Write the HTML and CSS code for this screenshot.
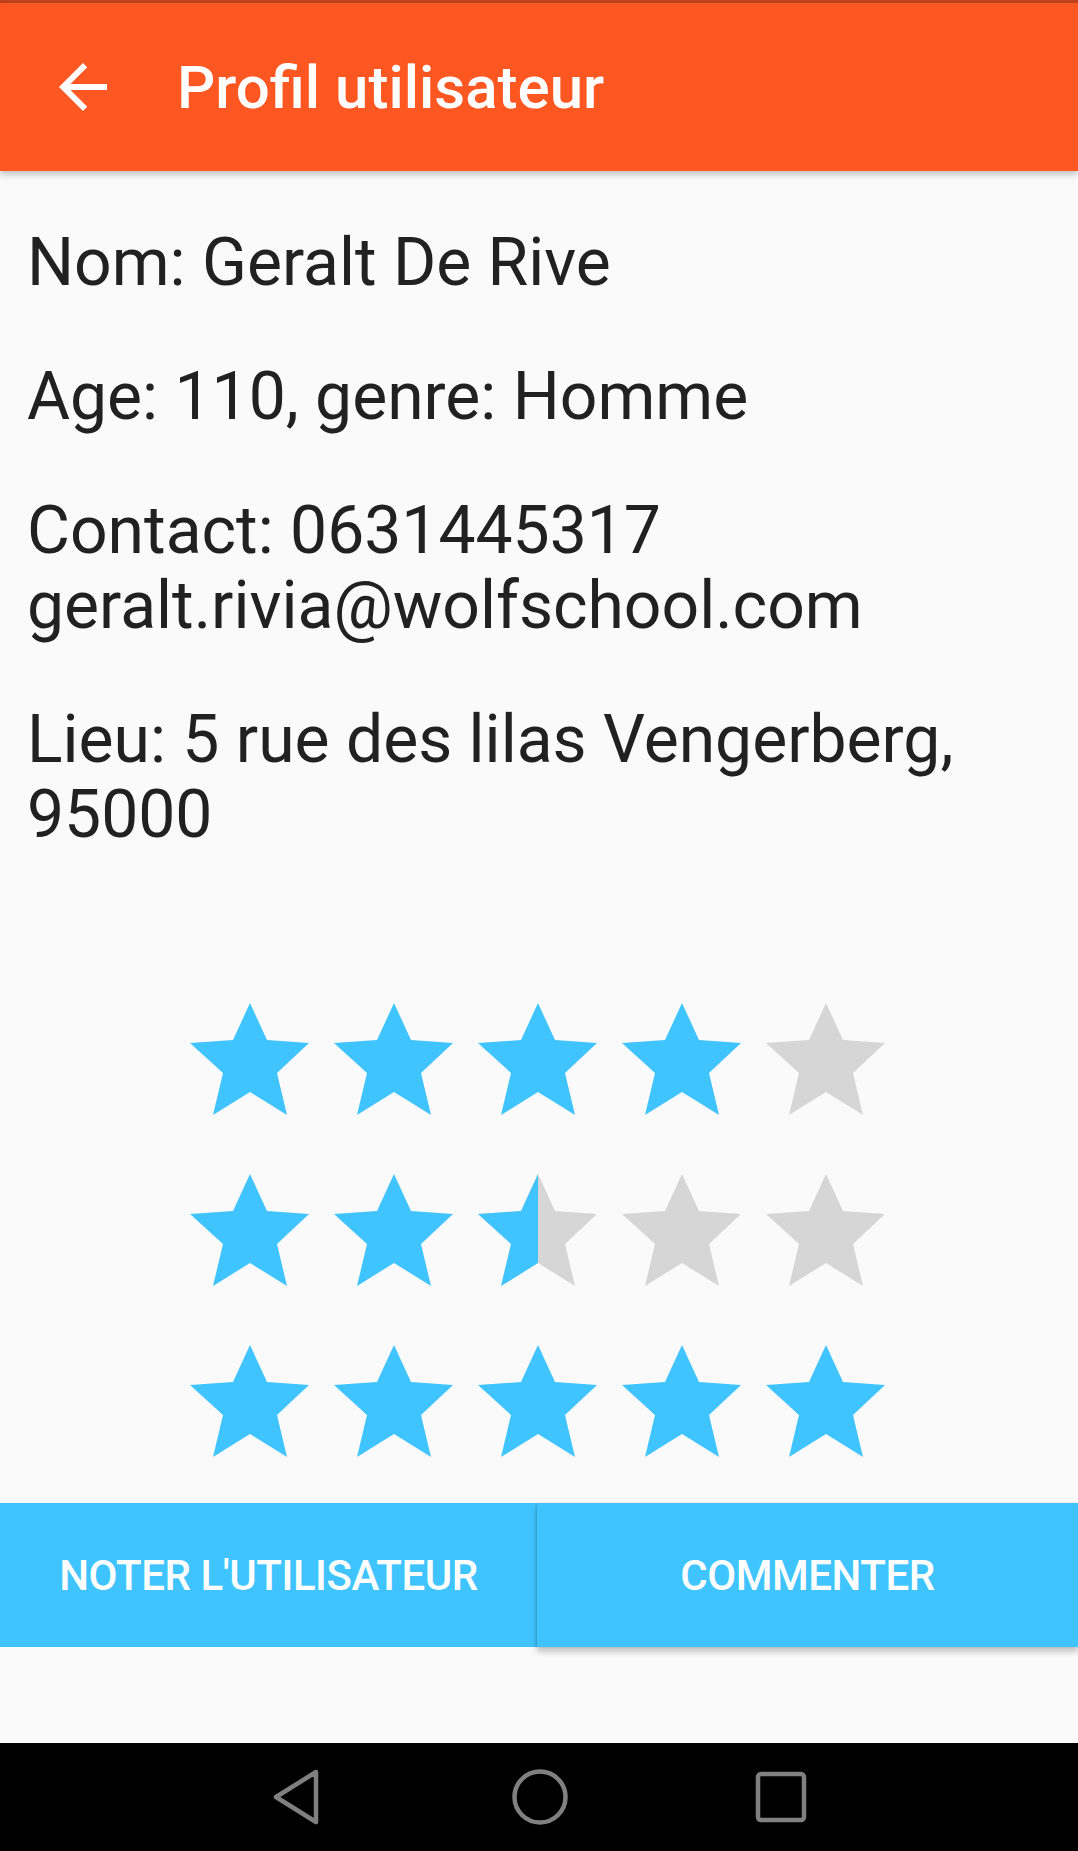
FILE: index.html
```html
<!DOCTYPE html>
<html lang="fr">
<head>
<meta charset="utf-8">
<title>Profil utilisateur</title>
<link rel="stylesheet" href="styles.css">
</head>
<body>
<svg class="defs" width="0" height="0" aria-hidden="true">
  <defs>
    <symbol id="star" viewBox="0 0 144 144">
      <polygon points="71,16 88,53 130,56 98,86 108,128 71,105 34,128 44,86 11,56 54,53"/>
    </symbol>
    <clipPath id="half">
      <rect x="0" y="0" width="71" height="144"/>
    </clipPath>
  </defs>
</svg>
<div class="screen">
  <div class="statusline"></div>
  <header class="appbar">
    <svg class="back" viewBox="0 0 24 24" width="72" height="72" aria-hidden="true">
      <path d="M20 11H7.83l5.59-5.59L12 4l-8 8 8 8 1.41-1.41L7.83 13H20v-2z" fill="#fff"/>
    </svg>
    <h1 class="title">Profil utilisateur</h1>
  </header>

  <main class="content">
    <p class="info">Nom: Geralt De Rive</p>
    <p class="info">Age: 110, genre: Homme</p>
    <p class="info">Contact: 0631445317 geralt.rivia@wolfschool.com</p>
    <p class="info">Lieu: 5 rue des lilas Vengerberg, 95000</p>

    <div class="ratings">
      <div class="stars">
        <svg class="star on"><use href="#star"/></svg>
        <svg class="star on"><use href="#star"/></svg>
        <svg class="star on"><use href="#star"/></svg>
        <svg class="star on"><use href="#star"/></svg>
        <svg class="star off"><use href="#star"/></svg>
      </div>
      <div class="stars">
        <svg class="star on"><use href="#star"/></svg>
        <svg class="star on"><use href="#star"/></svg>
        <svg class="star off" viewBox="0 0 144 144"><use href="#star" width="144" height="144"/><g clip-path="url(#half)"><use class="fill-on" href="#star" width="144" height="144"/></g></svg>
        <svg class="star off"><use href="#star"/></svg>
        <svg class="star off"><use href="#star"/></svg>
      </div>
      <div class="stars">
        <svg class="star on"><use href="#star"/></svg>
        <svg class="star on"><use href="#star"/></svg>
        <svg class="star on"><use href="#star"/></svg>
        <svg class="star on"><use href="#star"/></svg>
        <svg class="star on"><use href="#star"/></svg>
      </div>
    </div>

    <div class="actions">
      <button class="btn btn-left">Noter l'utilisateur</button>
      <button class="btn btn-right">Commenter</button>
    </div>
  </main>

  <nav class="navbar">
    <svg class="nav-icon" width="50" height="58" viewBox="0 0 50 58" aria-hidden="true">
      <path d="M44 4 L4 29 L44 54 Z" fill="none" stroke="#808080" stroke-width="4.5" stroke-linejoin="round"/>
    </svg>
    <svg class="nav-icon" width="58" height="58" viewBox="0 0 58 58" aria-hidden="true">
      <circle cx="29" cy="29" r="25.5" fill="none" stroke="#808080" stroke-width="4.5"/>
    </svg>
    <svg class="nav-icon" width="52" height="52" viewBox="0 0 52 52" aria-hidden="true">
      <rect x="3" y="3" width="46" height="46" rx="3" fill="none" stroke="#808080" stroke-width="4.5"/>
    </svg>
  </nav>
</div>
</body>
</html>
```

FILE: styles.css
```css
* {
  box-sizing: border-box;
}

html, body {
  margin: 0;
  padding: 0;
}

body {
  background: #fafafa;
  font-family: Roboto, "Noto Sans", "Liberation Sans", sans-serif;
  color: #212121;
}

.defs {
  position: absolute;
  width: 0;
  height: 0;
  overflow: hidden;
}

.screen {
  width: 1078px;
  height: 1851px;
  display: flex;
  flex-direction: column;
  overflow: hidden;
}

.statusline {
  height: 3px;
  background: #c1441a;
  flex: none;
}

.appbar {
  height: 168px;
  flex: none;
  background: #ff5722;
  display: flex;
  align-items: center;
  position: relative;
  z-index: 2;
  box-shadow: 0 3px 7px rgba(0, 0, 0, 0.26);
}

.back {
  margin-left: 47px;
  flex: none;
}

.title {
  margin: 0 0 0 58px;
  font-size: 60px;
  font-weight: 500;
  color: #fff;
  line-height: 1;
  padding-top: 2px;
}

.content {
  flex: 1;
  padding: 54px 27px 0 27px;
  display: flex;
  flex-direction: column;
}

.info {
  margin: 0 0 59px 0;
  font-size: 66px;
  line-height: 75px;
}

.info:last-of-type {
  margin-bottom: 0;
}

.ratings {
  margin-top: 135px;
  display: flex;
  flex-direction: column;
  align-items: center;
  gap: 27px;
}

.stars {
  display: flex;
}

.star {
  width: 144px;
  height: 144px;
  display: block;
}

.star.on {
  fill: #40c4ff;
}

.star.off {
  fill: #d6d6d6;
}

.fill-on {
  fill: #40c4ff;
}

.actions {
  margin: 30px -27px 0 -27px;
  display: flex;
  height: 144px;
}

.btn {
  border: none;
  margin: 0;
  padding: 0;
  background: #40c4ff;
  color: #fff;
  font-family: Roboto, "Noto Sans", "Liberation Sans", sans-serif;
  font-size: 42px;
  font-weight: 500;
  letter-spacing: -0.45px;
  text-transform: uppercase;
  height: 144px;
}

.btn-left {
  width: 537px;
  flex: none;
}

.btn-right {
  flex: 1;
  position: relative;
  box-shadow: 0 5px 6px rgba(0, 0, 0, 0.22), -1px 0 2px rgba(0, 0, 0, 0.12);
}

.navbar {
  height: 108px;
  flex: none;
  background: #000;
  display: flex;
  align-items: center;
  justify-content: center;
}

.nav-icon {
  display: block;
  flex: none;
}

.nav-icon:nth-child(2) {
  margin-left: 189px;
}

.nav-icon:nth-child(3) {
  margin-left: 186px;
}
```
